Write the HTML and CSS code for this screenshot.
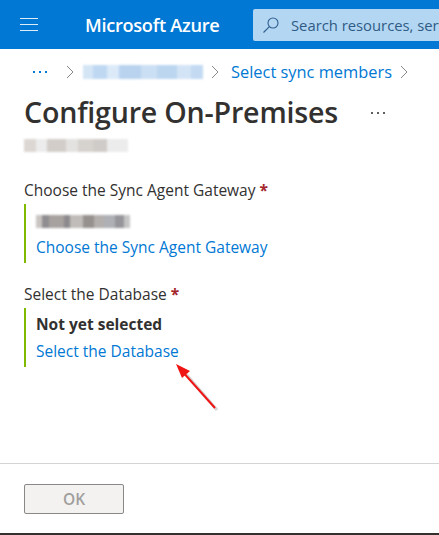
FILE: index.html
```html
<!DOCTYPE html>
<html lang="en">
<head>
    <meta charset="UTF-8">
    <meta name="viewport" content="width=device-width, initial-scale=1.0">
    <title>Configure On-Premises</title>
    <link rel="stylesheet" href="styles.css">
</head>
<body>

    <header class="topbar">
        <button class="menu-btn" aria-label="Menu">
            <span></span><span></span><span></span>
        </button>
        <div class="brand">Microsoft Azure</div>
        <div class="search">
            <svg class="search-icon" width="18" height="18" viewBox="0 0 18 18" fill="none" stroke="#2f5f8f" stroke-width="1.1">
                <circle cx="11" cy="7" r="5"></circle>
                <path d="M7.4 10.6 1.5 16.5"></path>
            </svg>
            <span class="search-text">Search resources, services, and docs</span>
        </div>
    </header>

    <nav class="breadcrumb">
        <span class="crumb-more"><i></i><i></i><i></i></span>
        <svg class="chevron chevron-first" width="8" height="14" viewBox="0 0 8 14"><path d="M1 1l6 6-6 6"></path></svg>
        <span class="blur-text blur-crumb"></span>
        <svg class="chevron" width="8" height="14" viewBox="0 0 8 14"><path d="M1 1l6 6-6 6"></path></svg>
        <a class="link crumb-link">Select sync members</a>
        <svg class="chevron" width="8" height="14" viewBox="0 0 8 14"><path d="M1 1l6 6-6 6"></path></svg>
    </nav>

    <main class="content">
        <div class="title-row">
            <h1>Configure On-Premises</h1>
            <span class="title-more"><i></i><i></i><i></i></span>
        </div>
        <div class="blur-text blur-sub"></div>

        <div class="form-group group-gateway">
            <label>Choose the Sync Agent Gateway <span class="req">*</span></label>
            <div class="selector">
                <div class="selector-value"><span class="blur-text blur-value"></span></div>
                <a class="link">Choose the Sync Agent Gateway</a>
            </div>
        </div>

        <div class="form-group group-database">
            <label>Select the Database <span class="req">*</span></label>
            <div class="selector">
                <div class="selector-value"><strong>Not yet selected</strong></div>
                <a class="link">Select the Database</a>
            </div>
        </div>
    </main>

    <footer class="actions">
        <button class="ok-btn" disabled>OK</button>
    </footer>

    <svg class="arrow" width="60" height="60" viewBox="0 0 60 60">
        <path d="M41 47 10 11" stroke="#b9b9b9" stroke-width="3" fill="none" opacity="0.6"></path>
        <path d="M39 45 5 7" stroke="#f01515" stroke-width="2" fill="none"></path>
        <path d="M0 1 14 8 6 15z" fill="#f01515"></path>
    </svg>

</body>
</html>
```

FILE: styles.css
```css
html, body {
    height: 100%;
}

body {
    margin: 0;
    position: relative;
    height: 535px;
    overflow: hidden;
    display: flex;
    flex-direction: column;
    box-sizing: border-box;
    border-bottom: 2px solid #323130;
    font-family: "Open Sans", "Noto Sans", Arial, sans-serif;
    font-size: 15.5px;
    color: #323130;
    background-color: #fff;
}

.topbar {
    height: 49px;
    flex: none;
    display: flex;
    align-items: center;
    background-color: #0078d4;
    color: white;
    overflow: hidden;
}

.menu-btn {
    width: 58px;
    flex: none;
    display: flex;
    flex-direction: column;
    gap: 5px;
    padding: 0 0 0 20px;
    background: none;
    border: none;
}

    .menu-btn span {
        display: block;
        width: 18px;
        height: 1px;
        background-color: #dcecf9;
    }

.brand {
    width: 168px;
    margin-left: 27px;
    flex: none;
    font-size: 18.2px;
    font-weight: 600;
    letter-spacing: -0.3px;
    white-space: nowrap;
}

.search {
    height: 32px;
    width: 300px;
    flex: none;
    display: flex;
    align-items: center;
    padding-left: 9px;
    box-sizing: border-box;
    background-color: #b3d6f2;
    border-radius: 2px;
    color: #2f5b85;
    white-space: nowrap;
    font-size: 14.8px;
}

.search-icon {
    flex: none;
    margin-right: 11px;
}

.breadcrumb {
    height: 47px;
    flex: none;
    display: flex;
    align-items: center;
    padding-left: 33px;
    padding-bottom: 2px;
    box-sizing: border-box;
    font-size: 16.4px;
}

.crumb-more,
.title-more {
    display: flex;
    gap: 4px;
}

    .crumb-more i,
    .title-more i {
        display: block;
        width: 2px;
        height: 2px;
        background-color: #0078d4;
    }

    .title-more i {
        background-color: #605e5c;
    }

.chevron {
    flex: none;
}

    .chevron path {
        fill: none;
        stroke: #8a8886;
        stroke-width: 1;
    }

.chevron-first {
    margin-left: 19px;
    margin-right: 9px;
}

.crumb-link {
    margin: 0 8px 0 12px;
    white-space: nowrap;
}

.blur-text {
    display: block;
    filter: blur(0.8px);
}

.blur-crumb {
    width: 120px;
    height: 14px;
    margin-right: 8px;
    background: linear-gradient(90deg, #d4e5f6 0 8%, #bfd8f1 8% 20%, #dbe9f8 20% 30%, #b9d3ef 30% 48%, #cbdff4 48% 62%, #bcd6f0 62% 78%, #d3e4f6 78% 90%, #c3daf2 90%);
}

.blur-sub {
    width: 104px;
    height: 13px;
    margin-top: 9px;
    background: linear-gradient(90deg, #dcd7d3 0 12%, #ececec 12% 22%, #d2cdc9 22% 40%, #e4e2e0 40% 52%, #d6d2ce 52% 66%, #cfcbc8 66% 80%, #ececec 80%);
}

.blur-value {
    width: 94px;
    height: 13px;
    margin-top: 3px;
    background: linear-gradient(90deg, #c9c5c3 0 6%, #8f8d90 6% 14%, #a7a2a0 14% 30%, #8d8a8e 30% 36%, #c0bcba 36% 50%, #96918f 50% 62%, #b3afad 62% 72%, #aeb0b5 72% 84%, #96959a 84% 94%, #c5c5c5 94%);
}

.content {
    flex: 1;
    padding: 0 24px;
}

.title-row {
    display: flex;
    align-items: center;
    margin-top: -2px;
}

h1 {
    margin: 0;
    font-size: 28.6px;
    line-height: 36px;
    font-weight: 600;
    letter-spacing: -0.2px;
    white-space: nowrap;
}

.title-more {
    margin: 2px 0 0 33px;
}

.form-group label {
    display: block;
    line-height: 20px;
}

.group-gateway {
    margin-top: 28px;
}

.group-database {
    margin-top: 21px;
}

.req {
    color: #a4262c;
    font-weight: 700;
}

.selector {
    height: 59px;
    margin-top: 4px;
    padding: 6px 0 0 10px;
    box-sizing: border-box;
    border-left: 2px solid #7fba00;
    display: flex;
    flex-direction: column;
    gap: 8px;
}

.selector-value {
    height: 20px;
    display: flex;
    align-items: center;
}

.link {
    color: #0078d4;
    line-height: 19px;
}

.actions {
    height: 70px;
    flex: none;
    padding: 20px 24px 0;
    box-sizing: border-box;
    border-top: 1px solid #d4d4d4;
}

.ok-btn {
    display: block;
    width: 100px;
    height: 30px;
    padding: 0;
    border: 1px solid #8a8886;
    border-radius: 2px;
    background-color: #f3f2f1;
    color: #a19f9d;
    font-family: inherit;
    font-size: 15.5px;
    font-weight: 600;
}

.arrow {
    position: absolute;
    left: 176px;
    top: 363px;
}
```
